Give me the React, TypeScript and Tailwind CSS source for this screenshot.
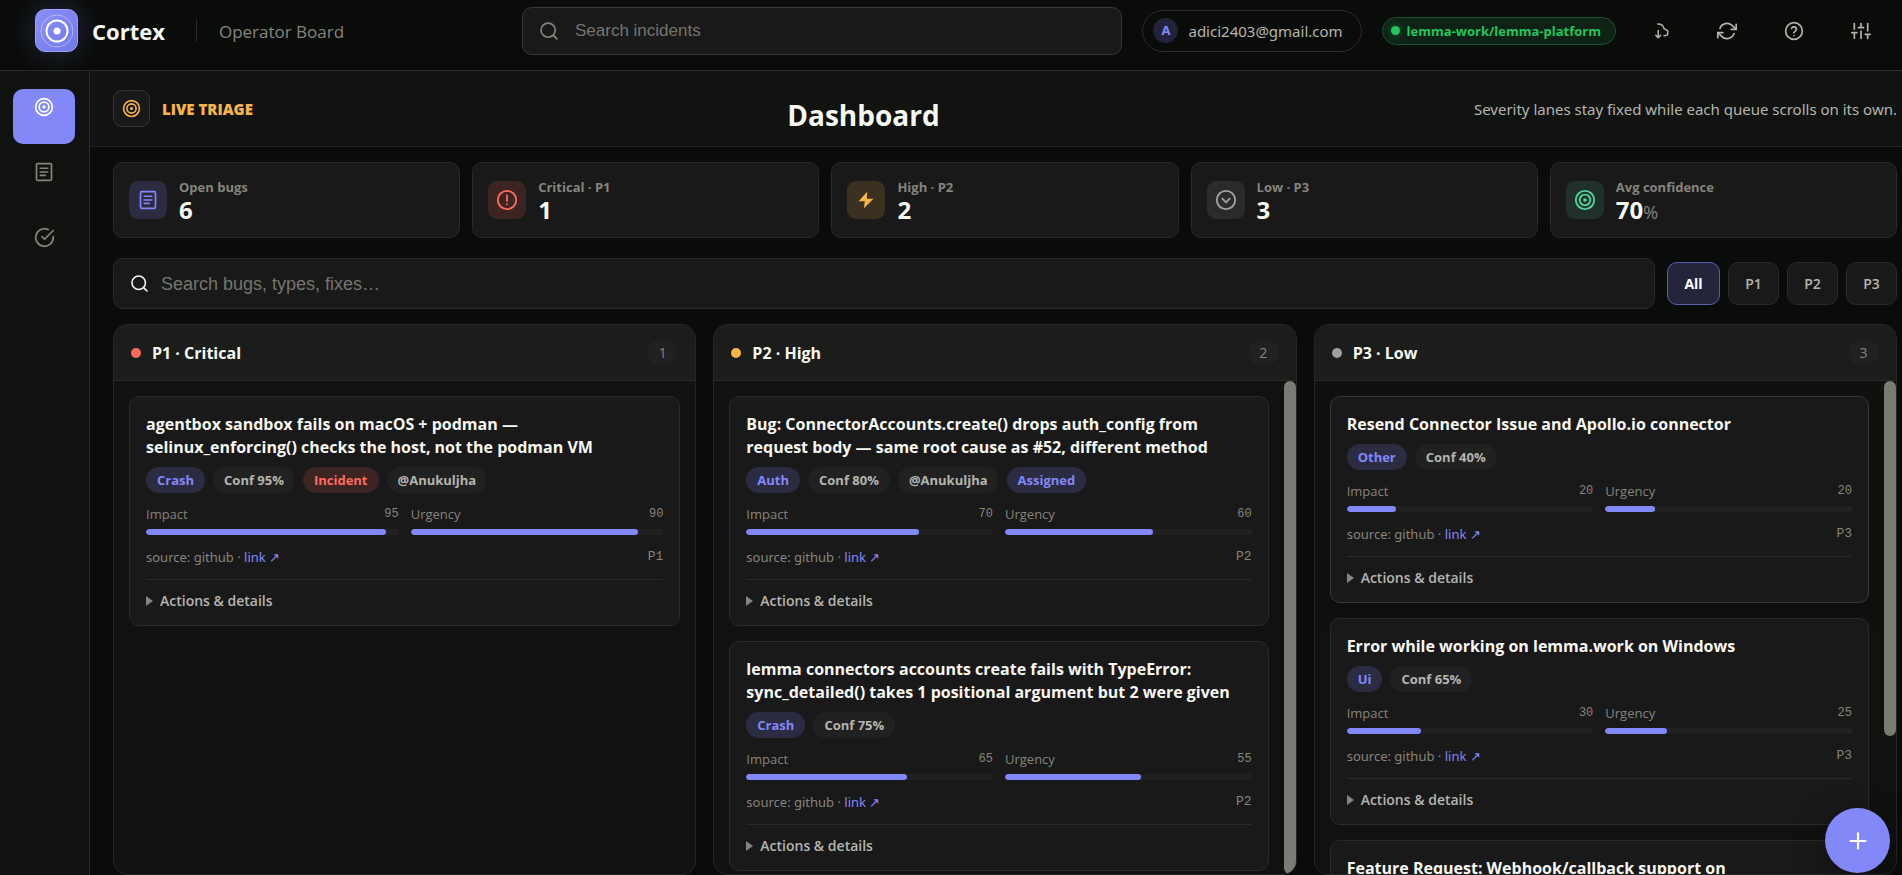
import React from 'react'
import { Plus } from 'lucide-react'

type IconProps = { className?: string }

type Tag = { label: string; tone: 'accent' | 'muted' | 'danger' }

type Bug = {
  title: string
  tags: Tag[]
  impact: number
  urgency: number
  priority: string
}

const TAG_TONES = {
  accent: 'bg-[#2b2c42] text-[#8388f8]',
  muted: 'bg-[#212121] text-[#b5b5af]',
  danger: 'bg-[#3c2422] text-[#ff6b60]',
}

const stroke = {
  viewBox: '0 0 24 24',
  fill: 'none',
  stroke: 'currentColor',
  strokeWidth: 2,
  strokeLinecap: 'round' as const,
  strokeLinejoin: 'round' as const,
}

const TargetIcon = ({ className }: IconProps) => (
  <svg {...stroke} className={className}>
    <circle cx="12" cy="12" r="10" />
    <circle cx="12" cy="12" r="5.8" />
    <circle cx="12" cy="12" r="1" />
  </svg>
)

const ListIcon = ({ className }: IconProps) => (
  <svg {...stroke} className={className}>
    <rect x="3" y="2" width="18" height="20" rx="1.5" />
    <path d="M7.5 7.5h9M7.5 12h9M7.5 16h6" />
  </svg>
)

const CheckIcon = ({ className }: IconProps) => (
  <svg {...stroke} className={className}>
    <path d="M22 11.1V12a10 10 0 1 1-5.9-9.1" />
    <path d="M22 4 12 14l-3-3" />
  </svg>
)

const SearchIcon = ({ className }: IconProps) => (
  <svg {...stroke} className={className}>
    <circle cx="11" cy="11" r="8.5" />
    <path d="m21.5 21.5-4-4" />
  </svg>
)

const AlertIcon = ({ className }: IconProps) => (
  <svg {...stroke} className={className}>
    <circle cx="12" cy="12" r="10" />
    <path d="M12 7v6M12 16.5v.1" />
  </svg>
)

const BoltIcon = ({ className }: IconProps) => (
  <svg viewBox="0 0 24 24" fill="currentColor" className={className}>
    <path d="M13.5 2 3 13.5h7.5l-1 8.5L21 10.5h-8z" />
  </svg>
)

const LowIcon = ({ className }: IconProps) => (
  <svg {...stroke} className={className}>
    <circle cx="12" cy="12" r="10" />
    <path d="m8 10.5 4 4 4-4" />
  </svg>
)

const CloudSyncIcon = ({ className }: IconProps) => (
  <svg {...stroke} viewBox="0 0 14 16" strokeWidth={1.5} className={className}>
    <path d="M3.2 7.5v7M.8 12.2l2.4 2.5 2.4-2.5" />
    <path d="M2.8 1C6.5 1 8.6 3 9 5.6l3.7 2v3.2c0 1.2-1.4 2-3.7 2" />
  </svg>
)

const SyncIcon = ({ className }: IconProps) => (
  <svg {...stroke} className={className}>
    <path d="M23 4v6h-6M1 20v-6h6" />
    <path d="M3.5 9a9 9 0 0 1 14.9-3.4L23 10M1 14l4.6 4.4A9 9 0 0 0 20.5 15" />
  </svg>
)

const HelpIcon = ({ className }: IconProps) => (
  <svg {...stroke} className={className}>
    <circle cx="12" cy="12" r="10" />
    <path d="M9.1 9a3 3 0 0 1 5.8 1c0 2-2.9 2.6-2.9 4M12 17.4v.1" />
  </svg>
)

const SlidersIcon = ({ className }: IconProps) => (
  <svg {...stroke} className={className}>
    <path d="M4 21v-7M4 10V3M12 21v-9M12 8V3M20 21v-5M20 12V3M1 14h6M9 8h6M17 16h6" />
  </svg>
)

const STATS = [
  { label: 'Open bugs', value: '6', unit: '', icon: ListIcon, size: 'size-5', tone: 'bg-[#2b2c42] text-[#8388f8]' },
  { label: 'Critical · P1', value: '1', unit: '', icon: AlertIcon, size: 'size-[22px]', tone: 'bg-[#3c2422] text-[#ff6b60]' },
  { label: 'High · P2', value: '2', unit: '', icon: BoltIcon, size: 'size-5', tone: 'bg-[#3b3121] text-[#f9b44a]' },
  { label: 'Low · P3', value: '3', unit: '', icon: LowIcon, size: 'size-[22px]', tone: 'bg-[#2a2c2b] text-[#a0a2a3]' },
  { label: 'Avg confidence', value: '70', unit: '%', icon: TargetIcon, size: 'size-[22px]', tone: 'bg-[#20302a] text-[#4fd69c]' },
]

const LANES: { name: string; dot: string; thumb: string; bugs: Bug[] }[] = [
  {
    name: 'P1 · Critical',
    dot: 'bg-[#ff6b60]',
    thumb: '',
    bugs: [
      {
        title: 'agentbox sandbox fails on macOS + podman — selinux_enforcing() checks the host, not the podman VM',
        tags: [
          { label: 'Crash', tone: 'accent' },
          { label: 'Conf 95%', tone: 'muted' },
          { label: 'Incident', tone: 'danger' },
          { label: '@Anukuljha', tone: 'muted' },
        ],
        impact: 95,
        urgency: 90,
        priority: 'P1',
      },
    ],
  },
  {
    name: 'P2 · High',
    dot: 'bg-[#f9b44a]',
    thumb: 'h-full',
    bugs: [
      {
        title: 'Bug: ConnectorAccounts.create() drops auth_config from request body — same root cause as #52, different method',
        tags: [
          { label: 'Auth', tone: 'accent' },
          { label: 'Conf 80%', tone: 'muted' },
          { label: '@Anukuljha', tone: 'muted' },
          { label: 'Assigned', tone: 'accent' },
        ],
        impact: 70,
        urgency: 60,
        priority: 'P2',
      },
      {
        title: 'lemma connectors accounts create fails with TypeError: sync_detailed() takes 1 positional argument but 2 were given',
        tags: [
          { label: 'Crash', tone: 'accent' },
          { label: 'Conf 75%', tone: 'muted' },
        ],
        impact: 65,
        urgency: 55,
        priority: 'P2',
      },
    ],
  },
  {
    name: 'P3 · Low',
    dot: 'bg-[#9d9fa1]',
    thumb: 'h-[72%]',
    bugs: [
      {
        title: 'Resend Connector Issue and Apollo.io connector',
        tags: [
          { label: 'Other', tone: 'accent' },
          { label: 'Conf 40%', tone: 'muted' },
        ],
        impact: 20,
        urgency: 20,
        priority: 'P3',
      },
      {
        title: 'Error while working on lemma.work on Windows',
        tags: [
          { label: 'Ui', tone: 'accent' },
          { label: 'Conf 65%', tone: 'muted' },
        ],
        impact: 30,
        urgency: 25,
        priority: 'P3',
      },
      {
        title: 'Feature Request: Webhook/callback support on',
        tags: [{ label: 'Other', tone: 'accent' }],
        impact: 20,
        urgency: 15,
        priority: 'P3',
      },
    ],
  },
]

const Meter = ({ label, value }: { label: string; value: number }) => (
  <div className="flex-1">
    <div className="flex justify-between text-[13px] leading-[18px] text-[#85857d]">
      <span>{label}</span>
      <span className="font-['Liberation_Mono',monospace] text-xs leading-[18px]">{value}</span>
    </div>
    <div className="mt-1.5 h-1.5 overflow-hidden rounded-full bg-[#212121]">
      <div className="h-full rounded-full bg-[#8388f8]" style={{ width: `${value}%` }} />
    </div>
  </div>
)

const BugCard = ({ bug, active }: { bug: Bug; active: boolean }) => (
  <article
    className={`shrink-0 rounded-[10px] border bg-[#191919] p-4 ${
      active ? 'border-[#383938] shadow-[0_8px_24px_rgba(0,0,0,0.3)]' : 'border-[#292a29]'
    }`}
  >
    <h3 className="text-base leading-[23px] font-bold text-[#f7f7f2]">{bug.title}</h3>
    <div className="mt-2 flex gap-2">
      {bug.tags.map((tag) => (
        <span
          key={tag.label}
          className={`flex h-[26px] items-center rounded-full px-[11px] pt-0.5 text-[13px] font-bold ${TAG_TONES[tag.tone]}`}
        >
          {tag.label}
        </span>
      ))}
    </div>
    <div className="mt-3 flex gap-3">
      <Meter label="Impact" value={bug.impact} />
      <Meter label="Urgency" value={bug.urgency} />
    </div>
    <div className="mt-3 flex justify-between font-['Noto_Sans',sans-serif] text-[13px] leading-5 text-[#85857d]">
      <span>
        source: github ·{' '}
        <a href="#" className="text-[#8388f8]">
          link ↗
        </a>
      </span>
      <span className="font-['Liberation_Mono',monospace]">{bug.priority}</span>
    </div>
    <details className="mt-3 border-t border-[#292a29] pt-3">
      <summary className="flex h-[17px] cursor-pointer list-none items-center gap-[7px] text-sm font-semibold text-[#b5b5af]">
        <span className="border-y-[5px] border-l-[7px] border-y-transparent border-l-[#85857d]" />
        Actions &amp; details
      </summary>
    </details>
  </article>
)

const App = () => {
  return (
    <div className="flex h-screen flex-col overflow-hidden bg-[#0a0c0a] font-['Open_Sans','Noto_Sans',sans-serif] text-[#f7f7f2]">
      {/* Top bar */}
      <header className="flex h-[71px] shrink-0 items-start border-b border-[#2a2c2a] pl-[35px]">
        <div className="flex h-[61px] w-[487px] items-center">
          <div className="flex size-[43px] items-center justify-center rounded-[10px] border border-[#9ca0fa] bg-linear-to-br from-[#8a8ffa] to-[#7378ea] shadow-[0_0_30px_rgba(131,136,248,0.25)]">
            <svg viewBox="0 0 36 36" fill="none" stroke="#fff" className="size-9">
              <circle cx="18" cy="18" r="16" strokeOpacity="0.4" />
              <circle cx="18" cy="18" r="10.5" strokeWidth="2" />
              <circle cx="18" cy="18" r="3.5" fill="#fff" stroke="none" />
            </svg>
          </div>
          <span className="ml-3.5 pt-0.5 text-[22px] font-bold">Cortex</span>
          <span className="mr-[22px] ml-[31px] h-[23px] w-px bg-[#2a2c2a]" />
          <span className="pt-0.5 text-[17px] text-[#85857d]">Operator Board</span>
        </div>
        <label className="mt-[7px] flex h-12 flex-1 items-center gap-4 rounded-[10px] border border-[#383938] bg-[#191919] px-4 text-[#85857d]">
          <SearchIcon className="size-5 shrink-0" />
          <input
            type="search"
            aria-label="Search incidents"
            placeholder="Search incidents"
            className="w-full bg-transparent font-['Liberation_Sans',sans-serif] text-[17px] outline-none placeholder:text-[#75756e]"
          />
        </label>
        <div className="flex h-[61px] items-center">
          <button className="ml-5 flex h-[42px] items-center gap-2.5 rounded-full border border-[#2a2c2a] pr-[18px] pl-2.5 font-['Noto_Sans',sans-serif] text-[15px] text-[#b5b5af]">
            <span className="flex size-[25px] items-center justify-center rounded-full bg-[#22233a] text-[13px] font-bold text-[#8388f8]">A</span>
            <span className="pt-0.5">adici2403@gmail.com</span>
          </button>
          <span className="ml-5 flex h-7 items-center gap-[7px] rounded-full border border-[#17542d] bg-[#0f2216] pr-3.5 pl-2 text-[13px] font-bold text-[#22c55e]">
            <span className="size-[9px] rounded-full bg-[#22c55e] shadow-[0_0_8px_rgba(34,197,94,0.5)]" />
            <span className="pt-0.5">lemma-work/lemma-platform</span>
          </span>
          <div className="flex w-[286px] items-center justify-between pr-[31px] pl-[38px] text-[#b5b5af]">
            <button aria-label="Cloud sync" className="flex w-4 justify-center">
              <CloudSyncIcon className="h-4 w-3.5" />
            </button>
            <button aria-label="Refresh">
              <SyncIcon className="size-5" />
            </button>
            <button aria-label="Help">
              <HelpIcon className="size-5" />
            </button>
            <button aria-label="Settings">
              <SlidersIcon className="size-5" />
            </button>
          </div>
        </div>
      </header>

      <div className="flex min-h-0 flex-1">
        {/* Side navigation */}
        <nav className="flex w-[90px] shrink-0 flex-col gap-2.5 border-r border-[#2a2c2a] bg-[#101210] pt-[18px] pr-3.5 pl-[13px] text-[#85857d]">
          <button aria-label="Dashboard" className="flex h-[55px] justify-center rounded-[10px] bg-[#8388f8] pt-2 text-white">
            <TargetIcon className="size-5" />
          </button>
          <button aria-label="Incidents" className="flex h-[55px] justify-center rounded-[10px] pt-2">
            <ListIcon className="size-5" />
          </button>
          <button aria-label="Resolved" className="flex h-[55px] justify-center rounded-[10px] pt-2">
            <CheckIcon className="size-[21px]" />
          </button>
        </nav>

        <main className="flex min-w-0 flex-1 flex-col">
          <div className="flex h-[76px] shrink-0 items-center justify-between border-b border-[#222422] bg-[#101310] pr-[5px] pl-[23px]">
            <div className="flex items-center gap-3 text-[#f9b44a]">
              <span className="flex size-[37px] items-center justify-center rounded-[9px] border border-[#343534] bg-[#191919]">
                <TargetIcon className="size-[19px]" />
              </span>
              <span className="pt-0.5 text-[15px] font-extrabold">LIVE TRIAGE</span>
            </div>
            <h1 className="pt-3 text-[28px] font-bold">Dashboard</h1>
            <p className="pt-0.5 font-['Noto_Sans',sans-serif] text-[15px] text-[#b5b5af]">
              Severity lanes stay fixed while each queue scrolls on its own.
            </p>
          </div>

          <div className="flex min-h-0 flex-1 flex-col pt-[15px] pr-[5px] pl-[23px]">
            <section className="grid grid-cols-5 gap-3">
              {STATS.map(({ label, value, unit, icon: Icon, size, tone }) => (
                <div key={label} className="flex h-[76px] items-center gap-3 rounded-[10px] border border-[#292a29] bg-[#191919] px-[15px]">
                  <span className={`flex size-[38px] items-center justify-center rounded-[9px] ${tone}`}>
                    <Icon className={size} />
                  </span>
                  <div className="pt-1">
                    <div className="text-[13px] leading-[18px] font-bold text-[#85857d]">{label}</div>
                    <div className="text-2xl leading-7 font-bold">
                      {value}
                      <span className="text-lg leading-7 font-normal text-[#85857d]">{unit}</span>
                    </div>
                  </div>
                </div>
              ))}
            </section>

            <div className="mt-5 flex items-center gap-3">
              <label className="flex h-[51px] flex-1 items-center gap-3 rounded-[10px] border border-[#292a29] bg-[#191919] px-4">
                <SearchIcon className="size-[19px] shrink-0" />
                <input
                  type="search"
                  aria-label="Search bugs"
                  placeholder="Search bugs, types, fixes…"
                  className="w-full bg-transparent font-['Liberation_Sans',sans-serif] text-lg outline-none placeholder:text-[#75756e]"
                />
              </label>
              <div className="flex gap-2 text-sm font-semibold text-[#b5b5af]">
                <button className="h-[43px] w-[53px] rounded-[10px] border border-[#5a5eb0] bg-[#24253a] font-bold text-white">All</button>
                <button className="h-[43px] w-[51px] rounded-[10px] border border-[#292a29] bg-[#191919]">P1</button>
                <button className="h-[43px] w-[51px] rounded-[10px] border border-[#292a29] bg-[#191919]">P2</button>
                <button className="h-[43px] w-[51px] rounded-[10px] border border-[#292a29] bg-[#191919]">P3</button>
              </div>
            </div>

            {/* Severity lanes */}
            <div className="mt-[15px] grid min-h-0 flex-1 grid-cols-3 gap-[17px]">
              {LANES.map((lane, laneIndex) => (
                <section key={lane.name} className="flex min-h-0 flex-col overflow-hidden rounded-[14px] border border-[#252725] bg-[#101210]">
                  <div className="flex h-14 shrink-0 items-center gap-[11px] border-b border-[#292b29] bg-[#1b1d1a] px-[17px]">
                    <span className={`size-2.5 rounded-full ${lane.dot}`} />
                    <h2 className="flex-1 text-base font-bold">{lane.name}</h2>
                    <span className="flex h-[25px] w-[31px] items-center justify-center rounded-full bg-[#212121] text-sm text-[#85857d]">
                      {laneIndex + 1}
                    </span>
                  </div>
                  <div className="flex min-h-0 flex-1">
                    <div className="flex flex-1 flex-col gap-[15px] overflow-y-auto p-[15px] [scrollbar-width:none]">
                      {lane.bugs.map((bug) => (
                        <BugCard key={bug.title} bug={bug} active={bug.title.startsWith('Resend')} />
                      ))}
                    </div>
                    {lane.thumb && <div className={`w-3 rounded-full bg-[#7b7b74] ${lane.thumb}`} />}
                  </div>
                </section>
              ))}
            </div>
          </div>
        </main>
      </div>

      <button
        aria-label="New bug"
        className="fixed right-3 bottom-0.5 flex size-[65px] items-center justify-center rounded-full bg-[#8388f8] text-white shadow-[0_8px_30px_rgba(0,0,0,0.45)]"
      >
        <Plus className="size-[26px]" strokeWidth={2} />
      </button>
    </div>
  )
}

export default App
